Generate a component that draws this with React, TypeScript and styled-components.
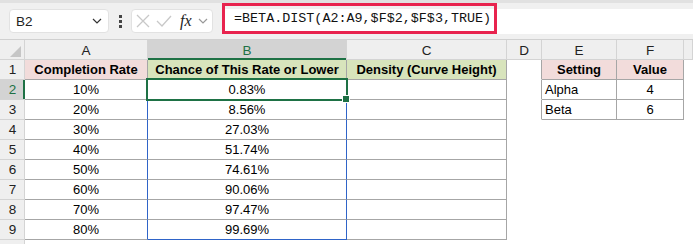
import React from 'react';
import styled, { createGlobalStyle } from 'styled-components';

const GlobalStyle = createGlobalStyle`
  html, body {
    margin: 0;
    padding: 0;
    background: #ffffff;
  }
  body {
    font-family: "Liberation Sans", Arial, sans-serif;
    overflow: hidden;
  }
`;

const colors = {
  toolbar: '#f0f0f0',
  strip: '#e1e1e1',
  header: '#efefef',
  headerSel: '#d3d3d3',
  headerLine: '#d4d4d4',
  border: '#a6a6a6',
  green: '#1e7145',
  blue: '#2f64c8',
  pink: '#f2dcdb',
  lime: '#d8e4bc',
  red: '#e8234e',
  text: '#000000',
};

const Window = styled.div`
  width: 693px;
  height: 244px;
  overflow: hidden;
  background: #fff;
`;

const FormulaBar = styled.div`
  height: 40px;
  box-sizing: border-box;
  background: ${colors.toolbar};
  border-top: 3px solid ${colors.strip};
  border-bottom: 1px solid #d0d0d0;
  display: flex;
  align-items: center;
  padding-left: 9px;
`;

const NameBox = styled.div`
  width: 100px;
  height: 24px;
  box-sizing: border-box;
  background: #fff;
  border: 1px solid #e2e2e2;
  border-radius: 4px;
  display: flex;
  align-items: center;
  justify-content: space-between;
  padding: 0 6px 0 6px;
  font-size: 13.5px;
  color: #222;
`;

const Dots = styled.div`
  width: 22px;
  display: flex;
  justify-content: center;
`;

const FxBox = styled.div`
  width: 82px;
  height: 24px;
  box-sizing: border-box;
  background: #fff;
  border: 1px solid #e2e2e2;
  border-radius: 4px;
  display: flex;
  align-items: center;
  gap: 6px;
  padding: 0 4px 0 4px;
`;

const FxLabel = styled.span`
  font-family: "Liberation Serif", "Times New Roman", serif;
  font-style: italic;
  font-size: 16px;
  color: #222;
  margin-left: 2px;
`;

const FormulaInput = styled.div`
  flex: 1;
  margin-left: 9px;
  height: 25px;
  background: #fff;
  position: relative;
  display: flex;
  align-items: center;
`;

const FormulaText = styled.div`
  position: absolute;
  left: 0;
  top: -6px;
  width: 275px;
  height: 31px;
  box-sizing: border-box;
  border: 3px solid ${colors.red};
  display: flex;
  align-items: center;
  padding-left: 9px;
  font-family: "Liberation Mono", "Courier New", monospace;
  font-size: 13.4px;
  color: #111;
`;

const Sheet = styled.div`
  display: grid;
  grid-template-columns: 25px 123px 199px 160px 35px 75px 67px 9px;
  grid-auto-rows: 20px;
`;

const ColHead = styled.div<{ $sel?: boolean }>`
  background: ${p => (p.$sel ? colors.headerSel : colors.header)};
  border-right: 1px solid ${colors.headerLine};
  box-shadow: ${p => (p.$sel ? `inset 0 -2px 0 ${colors.green}` : `inset 0 -1px 0 ${colors.headerLine}`)};
  color: ${p => (p.$sel ? colors.green : '#222')};
  font-size: 13.5px;
  display: flex;
  align-items: center;
  justify-content: center;
  box-sizing: border-box;
`;

const Corner = styled.div`
  background: ${colors.header};
  border-right: 1px solid ${colors.headerLine};
  box-shadow: inset 0 -1px 0 ${colors.headerLine};
  position: relative;
  box-sizing: border-box;
  &::after {
    content: '';
    position: absolute;
    right: 3px;
    bottom: 3px;
    width: 0;
    height: 0;
    border-left: 11px solid transparent;
    border-bottom: 11px solid #c6c6c6;
  }
`;

const RowHead = styled.div<{ $sel?: boolean }>`
  background: ${p => (p.$sel ? colors.headerSel : colors.header)};
  border-bottom: 1px solid ${colors.headerLine};
  box-shadow: ${p => (p.$sel ? `inset -2px 0 0 ${colors.green}` : `inset -1px 0 0 ${colors.headerLine}`)};
  color: ${p => (p.$sel ? colors.green : '#222')};
  font-size: 13.5px;
  display: flex;
  align-items: center;
  justify-content: center;
  box-sizing: border-box;
`;

const Cell = styled.div<{
  $bg?: string;
  $bold?: boolean;
  $align?: 'left' | 'center';
  $right?: string;
  $bottom?: string;
}>`
  background: ${p => p.$bg || '#fff'};
  font-weight: ${p => (p.$bold ? 700 : 400)};
  font-size: 13px;
  color: ${colors.text};
  display: flex;
  align-items: center;
  justify-content: ${p => (p.$align === 'left' ? 'flex-start' : 'center')};
  padding: 0 3px;
  box-sizing: border-box;
  border-right: 1px solid ${p => p.$right || 'transparent'};
  border-bottom: 1px solid ${p => p.$bottom || 'transparent'};
  position: relative;
  white-space: nowrap;
`;

const Selection = styled.div`
  position: absolute;
  left: -2px;
  top: -2px;
  right: -2px;
  bottom: -2px;
  border: 2px solid ${colors.green};
  pointer-events: none;
  z-index: 2;
`;

const FillHandle = styled.div`
  position: absolute;
  right: -4px;
  bottom: -4px;
  width: 6px;
  height: 6px;
  background: ${colors.green};
  border: 1px solid #fff;
  z-index: 3;
`;

const Chevron = ({ color = '#333' }: { color?: string }) => (
  <svg width="10" height="6" viewBox="0 0 10 6">
    <path d="M1 1 L5 5 L9 1" fill="none" stroke={color} strokeWidth="1.2" />
  </svg>
);

const rows = [
  ['10%', '0.83%'],
  ['20%', '8.56%'],
  ['30%', '27.03%'],
  ['40%', '51.74%'],
  ['50%', '74.61%'],
  ['60%', '90.06%'],
  ['70%', '97.47%'],
  ['80%', '99.69%'],
];

const settings: Record<number, [string, string]> = {
  2: ['Alpha', '4'],
  3: ['Beta', '6'],
};

export default function App() {
  const g = colors.border;
  return (
    <Window>
      <GlobalStyle />
      <FormulaBar>
        <NameBox>
          <span>B2</span>
          <Chevron />
        </NameBox>
        <Dots>
          <svg width="3" height="13" viewBox="0 0 3 13">
            <rect x="0" y="0" width="3" height="3" fill="#444" />
            <rect x="0" y="5" width="3" height="3" fill="#444" />
            <rect x="0" y="10" width="3" height="3" fill="#444" />
          </svg>
        </Dots>
        <FxBox>
          <svg width="14" height="14" viewBox="0 0 14 14">
            <path d="M1 1 L13 13 M13 1 L1 13" stroke="#c8c8c8" strokeWidth="1.3" />
          </svg>
          <svg width="16" height="14" viewBox="0 0 16 14">
            <path d="M1 7 L6 12 L15 2" fill="none" stroke="#c8c8c8" strokeWidth="1.3" />
          </svg>
          <FxLabel>fx</FxLabel>
          <Chevron color="#999" />
        </FxBox>
        <FormulaInput>
          <FormulaText>=BETA.DIST(A2:A9,$F$2,$F$3,TRUE)</FormulaText>
        </FormulaInput>
      </FormulaBar>

      <Sheet>
        <Corner />
        <ColHead>A</ColHead>
        <ColHead $sel>B</ColHead>
        <ColHead>C</ColHead>
        <ColHead>D</ColHead>
        <ColHead>E</ColHead>
        <ColHead>F</ColHead>
        <ColHead />

        <RowHead>1</RowHead>
        <Cell $bg={colors.pink} $bold $right={g} $bottom={g}>Completion Rate</Cell>
        <Cell $bg={colors.lime} $bold $right={g} $bottom={g}>Chance of This Rate or Lower</Cell>
        <Cell $bg={colors.lime} $bold $right={g} $bottom={g}>Density (Curve Height)</Cell>
        <Cell $right={g} />
        <Cell $bg={colors.pink} $bold $right={g} $bottom={g}>Setting</Cell>
        <Cell $bg={colors.pink} $bold $right={g} $bottom={g}>Value</Cell>
        <Cell />

        {rows.map(([rate, chance], i) => {
          const r = i + 2;
          const s = settings[r];
          return (
            <React.Fragment key={r}>
              <RowHead $sel={r === 2}>{r}</RowHead>
              <Cell $right={colors.blue} $bottom={g}>{rate}</Cell>
              <Cell $right={colors.blue} $bottom={r === 9 ? colors.blue : g}>
                {chance}
                {r === 2 && (
                  <Selection>
                    <FillHandle />
                  </Selection>
                )}
              </Cell>
              <Cell $right={g} $bottom={g} />
              <Cell $right={s ? g : undefined} />
              {s ? (
                <>
                  <Cell $align="left" $right={g} $bottom={g}>{s[0]}</Cell>
                  <Cell $right={g} $bottom={g}>{s[1]}</Cell>
                </>
              ) : (
                <>
                  <Cell />
                  <Cell />
                </>
              )}
              <Cell />
            </React.Fragment>
          );
        })}
        <RowHead />
      </Sheet>
    </Window>
  );
}
